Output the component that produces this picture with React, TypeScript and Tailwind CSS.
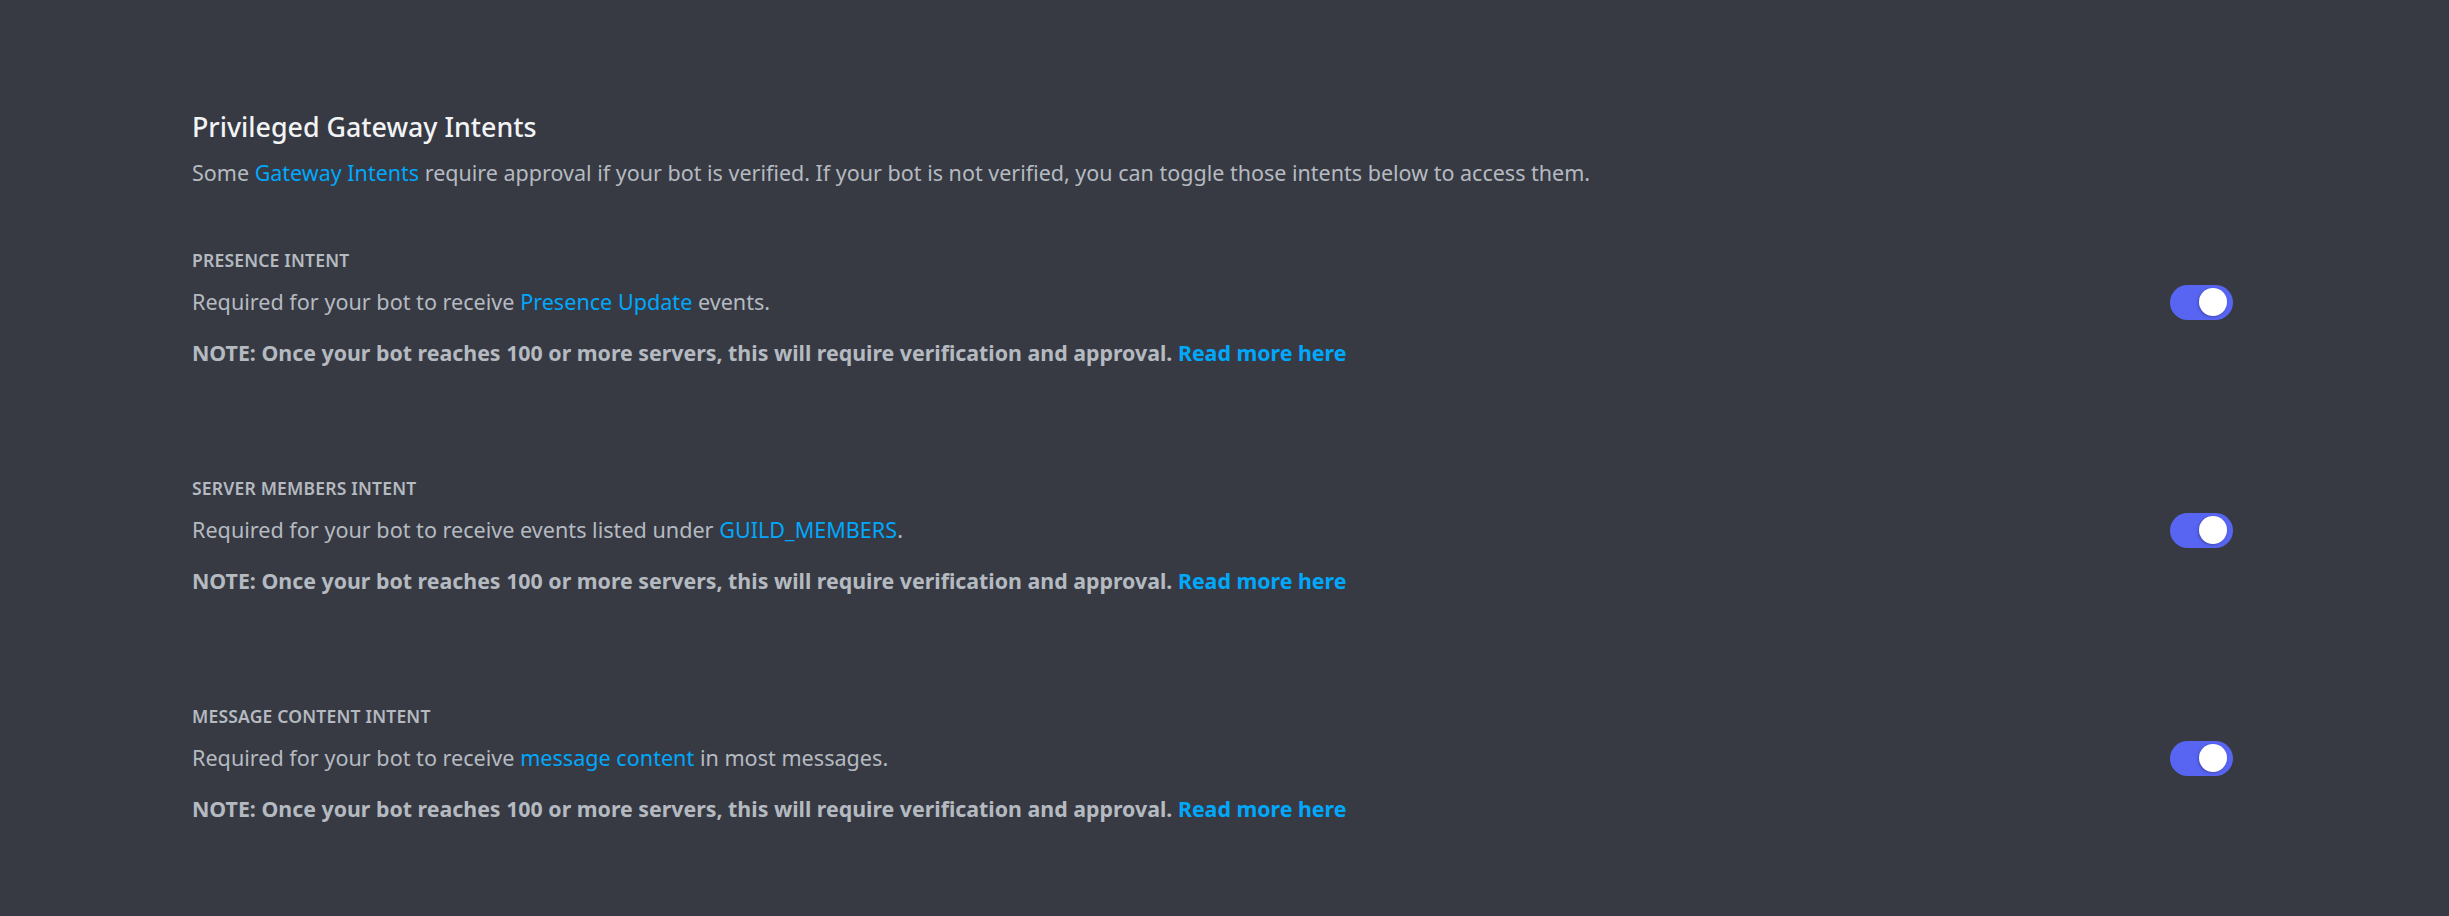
const intents = [
  {
    label: "PRESENCE INTENT",
    before: "Required for your bot to receive ",
    link: "Presence Update",
    after: " events.",
  },
  {
    label: "SERVER MEMBERS INTENT",
    before: "Required for your bot to receive events listed under ",
    link: "GUILD_MEMBERS",
    after: ".",
  },
  {
    label: "MESSAGE CONTENT INTENT",
    before: "Required for your bot to receive ",
    link: "message content",
    after: " in most messages.",
  },
];

function Toggle() {
  return (
    <div className="w-[63px] h-[35px] rounded-full bg-[#5865f2] flex items-center justify-end pr-[6px] shrink-0">
      <div className="w-[28px] h-[28px] rounded-full bg-white shadow-[-1px_1px_3px_rgba(0,0,0,0.25)]"></div>
    </div>
  );
}

export default function App() {
  return (
    <div
      className="min-h-[916px] w-full bg-[#373a43] pt-[111px] pl-[192px]"
      style={{ fontFamily: '"Noto Sans", "Open Sans", sans-serif' }}
    >
      <div className="w-[2041px]">
        <h2 className="text-[26.8px] leading-[32px] font-medium text-[#f2f3f5]">
          Privileged Gateway Intents
        </h2>
        <p className="mt-[18px] text-[21.5px] leading-[24px] text-[#b5bac1]">
          Some <span className="text-[#00a8fc]">Gateway Intents</span> require approval if your bot is
          verified. If your bot is not verified, you can toggle those intents below to access them.
        </p>

        <div className="mt-[65px] flex flex-col gap-[113px]">
          {intents.map((it) => (
            <div key={it.label}>
              <div className="text-[17.5px] leading-[20px] font-semibold tracking-[0.2px] text-[#b5bac1]">
                {it.label}
              </div>
              <div className="mt-[20px] flex items-center justify-between h-[24px]">
                <p className="text-[21.6px] leading-[24px] text-[#b5bac1]">
                  {it.before}
                  <span className="text-[#00a8fc]">{it.link}</span>
                  {it.after}
                </p>
                <Toggle />
              </div>
              <p className="mt-[27px] text-[21.35px] leading-[24px] font-bold text-[#b5bac1]">
                NOTE: Once your bot reaches 100 or more servers, this will require verification and
                approval. <span className="text-[#00a8fc]">Read more here</span>
              </p>
            </div>
          ))}
        </div>
      </div>
    </div>
  );
}
